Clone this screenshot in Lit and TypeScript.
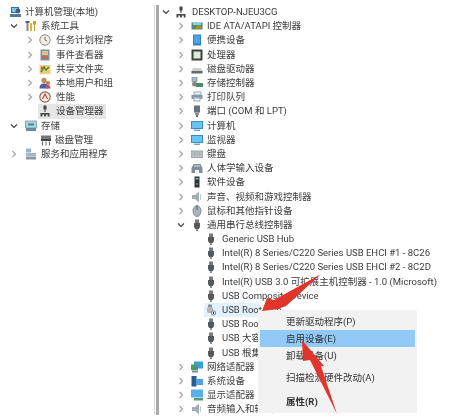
import { LitElement, html, css, svg } from "lit";
import { customElement } from "lit/decorators.js";

const icons: Record<string, unknown> = {
  computer: svg`<rect x="1" y="1" width="8" height="6" fill="#3a6ea5"/><rect x="2" y="2" width="6" height="4" fill="#7cc0ee"/><rect x="0" y="8" width="11" height="3" fill="#56789c"/><circle cx="8" cy="5" r="2.4" fill="#4a5a78"/>`,
  tools: svg`<rect x="1.5" y="1" width="2" height="10" fill="#7b8a96"/><rect x="5" y="3" width="2" height="8" fill="#e3b52c"/><path d="M8 1h3v3l-1 1v6H9V5L8 4z" fill="#c9a227"/><path d="M0.5 1h4v2h-4z" fill="#55606a"/>`,
  clock: svg`<circle cx="6" cy="6" r="5.2" fill="#f1efe6" stroke="#8c8c80"/><path d="M6 2.8V6l2.2 1" stroke="#7d6f42" fill="none"/>`,
  log: svg`<rect x="1.5" y="0.5" width="9" height="11" fill="#7f8fb0"/><rect x="3" y="2" width="6" height="4" fill="#d9c777"/><rect x="3" y="7" width="6" height="3" fill="#c9645a"/>`,
  share: svg`<rect x="0.5" y="2" width="11" height="9" fill="#e8cf78"/><path d="M2 9l3-5 2 3 3-3" stroke="#5c8a3c" stroke-width="1.6" fill="none"/><circle cx="3" cy="5" r="1.2" fill="#c6603c"/>`,
  users: svg`<circle cx="5" cy="3.4" r="2.6" fill="#b98a5c"/><path d="M0.5 11.5c0-4 2-5 4.5-5s4.5 1 4.5 5z" fill="#4a5fa8"/><circle cx="9" cy="6" r="2" fill="#c8783c"/><path d="M6.5 11.5c0-2.5 1-3.5 2.5-3.5s2.5 1 2.5 3.5z" fill="#c04f7a"/>`,
  perf: svg`<circle cx="6" cy="6" r="5.2" fill="#f7efe6" stroke="#9a5a50" stroke-width="1.2"/><path d="M3.5 8L6 3l2.5 5" stroke="#b8443a" fill="none" stroke-width="1.2"/>`,
  devmgr: svg`<rect x="4.5" y="0.5" width="3" height="4" fill="#444"/><rect x="5.4" y="4" width="1.2" height="3" fill="#555"/><path d="M1.5 8h9v3.5h-1.8V9.5h-1.8v2H5.1V9.5H3.3v2H1.5z" fill="#444"/>`,
  storage: svg`<rect x="0.5" y="1" width="11" height="7" fill="#a8d4ee" stroke="#5e8aa8" stroke-width=".7"/><rect x="1" y="8" width="10" height="3" fill="#6c8a9a"/><path d="M3 3.5h6v2H3z" fill="#3f8f6a"/>`,
  disk: svg`<rect x="1" y="1.5" width="10" height="3.5" fill="#777"/><rect x="1" y="5" width="10" height="2" fill="#444"/><path d="M2.5 7.5v4M6 7.5v4M9.5 7.5v4" stroke="#666"/>`,
  services: svg`<rect x="1" y="0.5" width="5" height="4" fill="#8fb6d4"/><rect x="1" y="5" width="10" height="3" fill="#a9b6c2"/><rect x="1" y="8.5" width="10" height="3" fill="#8a98a6"/>`,
  ide: svg`<rect x="0.5" y="2.5" width="11" height="7" fill="#4f8a72"/><rect x="2" y="2" width="8" height="3" fill="#8fd0e0"/><rect x="5" y="5.5" width="5" height="3.5" fill="#a08c3c"/>`,
  portable: svg`<rect x="2" y="0.5" width="8" height="11" fill="#2f7fc4"/><rect x="3" y="1.5" width="6" height="8" fill="#4ca5e6"/>`,
  cpu: svg`<rect x="0.5" y="0.5" width="11" height="11" fill="#37443c"/><rect x="2.5" y="2.5" width="7" height="7" fill="#dfe8dc"/>`,
  drive: svg`<path d="M2 5h8l1.5 3v2h-11V8z" fill="#cfcfcf"/><rect x="0.5" y="8" width="11" height="2.5" fill="#6a6a6a"/>`,
  ctrl: svg`<rect x="1" y="0.5" width="5" height="4" fill="#9ac2d8" stroke="#667" stroke-width=".5"/><circle cx="3.5" cy="7" r="2.5" fill="#8a8a78"/><rect x="5" y="6" width="7" height="4" fill="#4f8a62"/>`,
  printer: svg`<rect x="3" y="1" width="7" height="3" fill="#eef3f8" stroke="#6e88a0" stroke-width=".7"/><path d="M0.5 4h11v4h-2V6.5H2.5V8h-2z" fill="#7c97ae"/><rect x="3" y="7" width="6" height="3" fill="#f4f6f8" stroke="#6e88a0" stroke-width=".7"/>`,
  port: svg`<rect x="3" y="0.5" width="6" height="7" fill="#67717a"/><rect x="4" y="7.5" width="4" height="2.5" fill="#8a9096"/><rect x="5.2" y="10" width="1.6" height="2" fill="#555"/>`,
  monitor: svg`<rect x="0" y="1" width="12" height="8" fill="#2f8fd0"/><rect x="1" y="2" width="10" height="6" fill="#6cc3f2"/><rect x="3" y="9.5" width="6" height="1.5" fill="#8ca2b4"/>`,
  keyboard: svg`<rect x="0" y="3" width="12" height="6.5" fill="#c4c8ca" stroke="#7f8589" stroke-width=".7"/><path d="M1.5 5h9M1.5 7h9" stroke="#8d9397" stroke-dasharray="1 .6"/>`,
  hid: svg`<path d="M0.5 6l2-4h7l2 4v5H8V8H4v3H0.5z" fill="#7d8f9e"/><path d="M3 4h6" stroke="#dfe6ea"/>`,
  soft: svg`<rect x="3.5" y="0.5" width="5" height="11" fill="#2d3438"/><rect x="4.5" y="2" width="3" height="1.5" fill="#9aa"/><circle cx="6" cy="8" r="1" fill="#889"/>`,
  sound: svg`<path d="M1 4h3l4-3.5v11L4 8H1z" fill="#a3aeb4"/><path d="M9.5 3v6" stroke="#c0c8cc"/>`,
  mouse: svg`<ellipse cx="6" cy="6" rx="4" ry="5.5" fill="#a9b4bd" stroke="#66727c" stroke-width=".7"/><path d="M6 1v4" stroke="#4e5860"/>`,
  usb: svg`<rect x="4" y="0.5" width="4" height="3.5" fill="#777b7e"/><path d="M3 4h6v4l-1.2 2H4.200L3 8z" fill="#55595c"/><rect x="5.2" y="10" width="1.6" height="2" fill="#777"/>`,
  usboff: svg`<rect x="3" y="0.5" width="4" height="3" fill="#8d9296"/><path d="M2 3.5h6v4l-1 1.5H3L2 7.5z" fill="#b4b8bb"/><circle cx="8.5" cy="9" r="2.2" fill="#f4f4f4" stroke="#444" stroke-width=".6"/><path d="M8.5 7.8v2.2" stroke="#222"/>`,
  net: svg`<rect x="3" y="0.5" width="9" height="7" fill="#3aa0d8"/><rect x="0" y="3.5" width="7" height="5.5" fill="#4e9a72"/><rect x="1" y="9.5" width="6" height="2" fill="#6f8a9a"/>`,
  system: svg`<rect x="0.5" y="1" width="5" height="10.5" fill="#2a5d96"/><rect x="5" y="4" width="7" height="6" fill="#4ea6dc"/>`,
  display: svg`<rect x="0" y="0.5" width="12" height="8" fill="#58b0e6"/><rect x="3" y="9" width="9" height="2.5" fill="#5a9a7a"/>`,
};

type Row = [number, string, string, string, string?];
// depth, chevron (o open, c closed, n none), icon, label, extra class
const leftRows: Row[] = [
  [0, "n", "computer", "计算机管理(本地)"],
  [1, "o", "tools", "系统工具"],
  [2, "c", "clock", "任务计划程序"],
  [2, "c", "log", "事件查看器"],
  [2, "c", "share", "共享文件夹"],
  [2, "c", "users", "本地用户和组"],
  [2, "c", "perf", "性能"],
  [2, "n", "devmgr", "设备管理器", "gray"],
  [1, "o", "storage", "存储"],
  [2, "n", "disk", "磁盘管理", "plain"],
  [1, "c", "services", "服务和应用程序"],
];
const rightRows: Row[] = [
  [0, "o", "devmgr", "DESKTOP-NJEU3CG"],
  [1, "c", "ide", "IDE ATA/ATAPI 控制器"],
  [1, "c", "portable", "便携设备"],
  [1, "c", "cpu", "处理器"],
  [1, "c", "drive", "磁盘驱动器"],
  [1, "c", "ctrl", "存储控制器"],
  [1, "c", "printer", "打印队列"],
  [1, "c", "port", "端口 (COM 和 LPT)"],
  [1, "c", "monitor", "计算机"],
  [1, "c", "monitor", "监视器"],
  [1, "c", "keyboard", "键盘"],
  [1, "c", "hid", "人体学输入设备"],
  [1, "c", "soft", "软件设备"],
  [1, "c", "sound", "声音、视频和游戏控制器"],
  [1, "c", "mouse", "鼠标和其他指针设备"],
  [1, "o", "usb", "通用串行总线控制器"],
  [2, "n", "usb", "Generic USB Hub"],
  [2, "n", "usb", "Intel(R) 8 Series/C220 Series USB EHCI #1 - 8C26"],
  [2, "n", "usb", "Intel(R) 8 Series/C220 Series USB EHCI #2 - 8C2D"],
  [2, "n", "usb", "Intel(R) USB 3.0 可扩展主机控制器 - 1.0 (Microsoft)"],
  [2, "n", "usb", "USB Composite Device"],
  [2, "n", "usboff", "USB Root Hub", "blue"],
  [2, "n", "usb", "USB Root Hub"],
  [2, "n", "usb", "USB 大容量存储设备"],
  [2, "n", "usb", "USB 根集线器"],
  [1, "c", "net", "网络适配器"],
  [1, "c", "system", "系统设备"],
  [1, "c", "display", "显示适配器"],
  [1, "c", "sound", "音频输入和输出"],
];

@customElement("app-root")
export class AppRoot extends LitElement {
  static styles = css`
    :host {
      display: block;
      width: 460px;
      height: 419px;
      background: #fff;
      overflow: hidden;
      font-family: Roboto, "Noto Sans CJK SC", sans-serif;
      font-size: 9.5px;
      color: #3c3c3c;
    }
    .page {
      position: relative;
      display: flex;
      width: 460px;
      height: 419px;
      filter: blur(0.45px);
    }
    .pane {
      padding-top: 5px;
      display: flex;
      flex-direction: column;
    }
    .left { width: 154px; }
    .divider {
      width: 5px;
      margin: 5px 0 4px;
      border-left: 1px solid #d8d8d8;
      box-sizing: border-box;
    }
    .divider div {
      width: 3px;
      height: 100%;
      margin-left: 1px;
      background: #a9a9a9;
    }
    .right {
      flex: 1;
      min-width: 0;
    }
    .row {
      display: flex;
      align-items: center;
      height: 14.2px;
      white-space: nowrap;
    }
    .chev {
      width: 8px;
      height: 8px;
      flex: none;
    }
    .ico {
      width: 12px;
      height: 12px;
      flex: none;
    }
    .label {
      margin-left: 4px;
      padding: 1px 2px 1px 0;
      line-height: 12px;
    }
    .left .d0 { padding-left: 10px; }
    .left .d0 .chev { display: none; }
    .left .d0 .label { margin-left: 3px; }
    .left .d1 { padding-left: 10px; }
    .left .d1 .chev { margin-right: 7px; }
    .left .d1 .label { margin-left: 4px; }
    .left .d2 { padding-left: 26px; }
    .left .d2 .chev { margin-right: 5px; }
    .left .d2 .label { margin-left: 5px; }
    .right .d0 { padding-left: 3px; }
    .right .d0 .chev { margin-right: 5px; }
    .right .d0 .label { margin-left: 5px; }
    .right .d1 { padding-left: 18px; }
    .right .d1 .chev { margin-right: 6px; }
    .right .d1 .label { margin-left: 4px; }
    .right .d2 { padding-left: 46px; }
    .right .d2 .chev { display: none; }
    .right .d2 .label { margin-left: 5px; }
    .gray {
      background: #e6e6e6;
      margin-left: 38px;
      width: 67px;
      padding-left: 1px !important;
    }
    .gray .chev, .plain .chev { display: none; }
    .left .plain { padding-left: 40px; }
    .left .plain .label { margin-left: 3px; }
    .right .blue {
      background: #e3f1fc;
      margin-left: 45px;
      padding-left: 1px;
      width: 54px;
    }
    .menu {
      position: absolute;
      left: 258px;
      top: 310px;
      width: 159px;
      height: 103px;
      box-sizing: border-box;
      padding: 3px 2px;
      background: #f2f2f2;
      display: flex;
      flex-direction: column;
      color: #333;
    }
    .mi {
      height: 17px;
      line-height: 17px;
      padding-left: 26px;
      flex: none;
    }
    .mi.hl { background: #91c9f7; }
    .gap { height: 2px; flex: none; }
    .mi.tall { height: 24px; line-height: 24px; }
    .mi.bold { font-weight: 700; }
    .arrows {
      position: absolute;
      inset: 0;
      width: 460px;
      height: 419px;
    }
  `;

  private chevron(kind: string) {
    const path = kind === "o" ? "M1 2.5l3 3 3-3" : kind === "c" ? "M2.5 1l3 3-3 3" : "";
    const stroke = kind === "o" ? "#444" : "#a5a5a5";
    return html`<svg class="chev" viewBox="0 0 8 8"><path d=${path} fill="none" stroke=${stroke} stroke-width="1.2"/></svg>`;
  }

  private row(r: Row) {
    const [d, c, ic, text, extra] = r;
    return html`<div class="row d${d} ${extra ?? ""}">
      ${this.chevron(c)}
      <svg class="ico" viewBox="0 0 12 12">${icons[ic]}</svg>
      <span class="label">${text}</span>
    </div>`;
  }

  render() {
    return html`<div class="page">
      <div class="pane left">${leftRows.map((r) => this.row(r))}</div>
      <div class="divider"><div></div></div>
      <div class="pane right">${rightRows.map((r) => this.row(r))}</div>
      <div class="menu">
        <div class="mi">更新驱动程序(P)</div>
        <div class="mi hl">启用设备(E)</div>
        <div class="mi">卸载设备(U)</div>
        <div class="gap"></div>
        <div class="mi tall">扫描检测硬件改动(A)</div>
        <div class="mi tall bold">属性(R)</div>
      </div>
      <svg class="arrows" viewBox="0 0 460 419">
        <path d="M262 311L267 298L274 300L321 274L286 306L278 309Z" fill="#e0352b"/>
        <path d="M302 340L324 366L321 366L337 414L310 360L303 361Z" fill="#e0352b"/>
      </svg>
    </div>`;
  }
}
